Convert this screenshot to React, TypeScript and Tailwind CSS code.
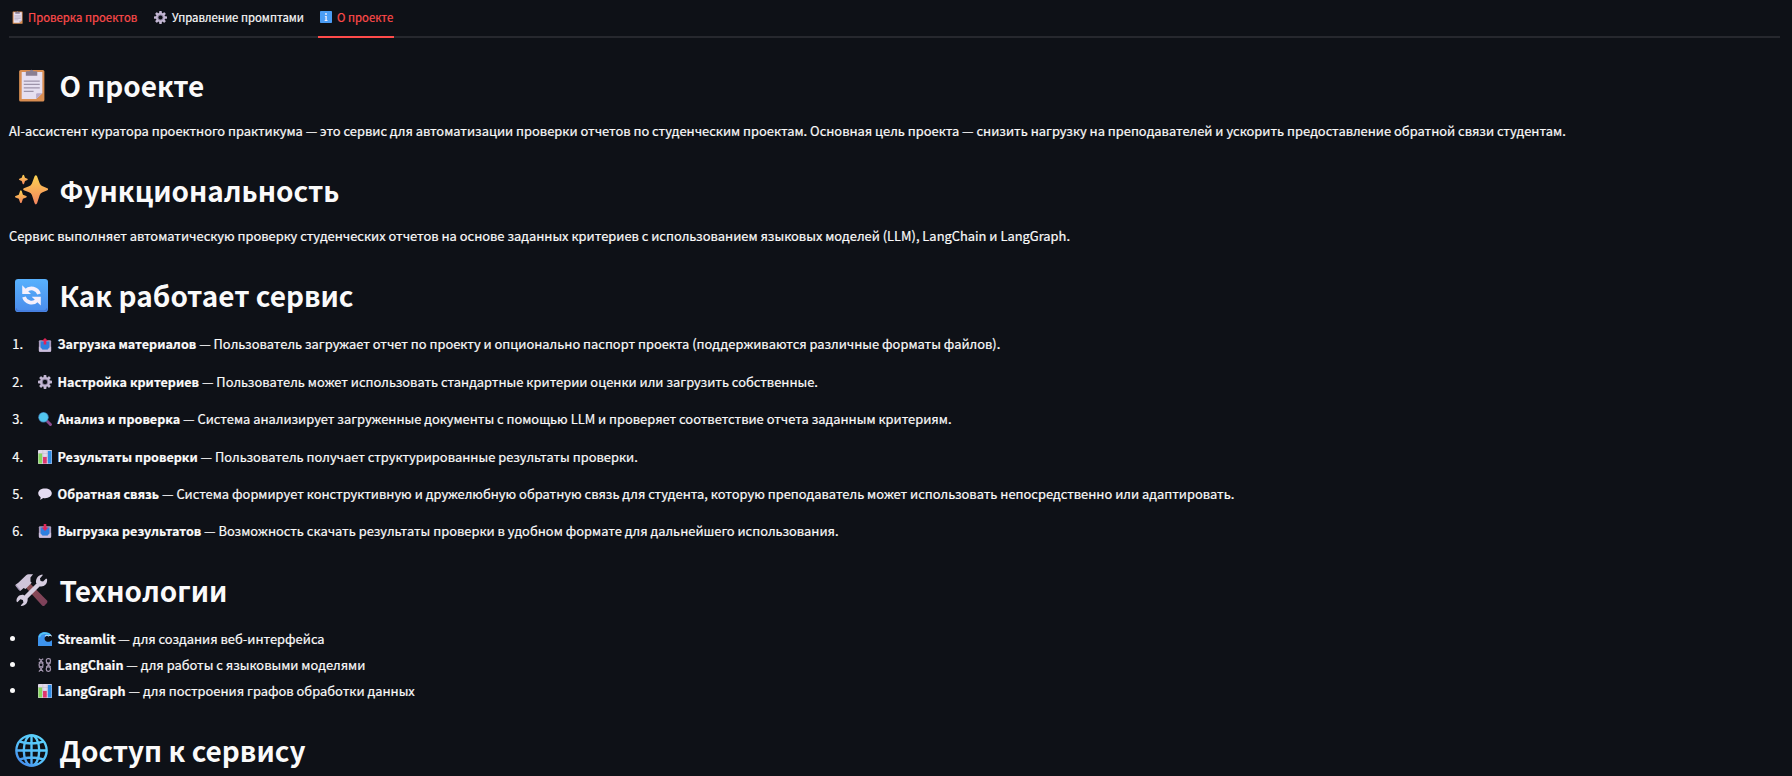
import { type ReactNode } from "react";

type IconProps = { className?: string };

function Clipboard({ className }: IconProps) {
  return (
    <svg className={className} viewBox="0 0 32 32">
      <rect x="4" y="1" width="24.5" height="30.5" rx="1.5" fill="#d98e52" />
      <path d="M6.5 3h20v20.5l-6 5.5h-14z" fill="#e6dff0" />
      <path d="M20.5 29v-4.6q0-.9.9-.9h5.1z" fill="#b9aac9" />
      <path d="M10.5 3.2q0-1 1-1h2.6a2 2 0 0 1 3.9 0h2.6q1 0 1 1v3.4H10.5z" fill="#8a7f93" />
      <path d="M8.5 11.7h15.5M8.5 15h15.5M8.5 18.4h15.5M8.5 21.8h9.5" stroke="#9d93a9" strokeWidth="1.2" />
    </svg>
  );
}

function Gear({ className }: IconProps) {
  return (
    <svg className={className} viewBox="0 0 32 32">
      <g fill="#c3b7d3">
        {[0, 45, 90, 135].map((a) => (
          <rect key={a} x="12.7" y="0" width="6.6" height="32" rx="1.6" transform={`rotate(${a} 16 16)`} />
        ))}
        <circle cx="16" cy="16" r="11.5" />
      </g>
      <circle cx="16" cy="16" r="7.2" fill="#8f83a1" />
      <circle cx="16" cy="16" r="5" fill="#0e1117" />
    </svg>
  );
}

function Info({ className }: IconProps) {
  return (
    <svg className={className} viewBox="0 0 32 32">
      <rect width="32" height="32" rx="2" fill="#4b9df5" />
      <circle cx="16" cy="8" r="2.4" fill="#f3eefb" />
      <path d="M13 13h5v11h2v2.5h-7.500V24h2v-8.500H13z" fill="#f3eefb" />
    </svg>
  );
}

function Sparkles({ className }: IconProps) {
  return (
    <svg className={className} viewBox="0 0 32 32">
      <defs>
        <linearGradient id="spark" x1="0" y1="0" x2="0" y2="1">
          <stop offset="0" stopColor="#fcd351" />
          <stop offset="1" stopColor="#f5855f" />
        </linearGradient>
      </defs>
      <g fill="url(#spark)">
        <path d="M19 2.200q1.200-2.200 2.400 0l2.600 7q.8 2 2.800 2.700l4.600 1.900q1.400 1 0 2l-4.600 1.900q-2 .7-2.800 2.700l-2.600 8q-1.200 2.200-2.400 0l-2.600-8q-.8-2-2.800-2.700l-5-1.900q-1.400-1 0-2l5-1.900q2-.7 2.800-2.700z" />
        <path d="M7.400 1.200q.7-1 1.400 0l.9 2.500 2.300 1q.9 .6 0 1.200l-2.300 1-.9 2.500q-.7 1-1.400 0l-.9-2.500-2.300-1q-.9-.6 0-1.200l2.300-1z" />
        <path d="M4.900 16.400q.8-1.100 1.600 0l1.200 3.600 3.200 1.300q1 .7 0 1.400l-3.200 1.300-1.200 3.600q-.8 1.100-1.600 0L3.700 24 .5 22.700q-1-.7 0-1.400L3.700 20z" />
      </g>
    </svg>
  );
}

function Refresh({ className }: IconProps) {
  return (
    <svg className={className} viewBox="0 0 32 32">
      <defs>
        <linearGradient id="refresh" x1="0" y1="0" x2="0" y2="1">
          <stop offset="0" stopColor="#58b1fd" />
          <stop offset="1" stopColor="#4a8ceb" />
        </linearGradient>
      </defs>
      <rect width="32" height="32" rx="3" fill="url(#refresh)" />
      <path d="M1 28.500q.5 2.500 3 2.500h24q2.500 0 3-2.500" fill="none" stroke="#4373d3" strokeWidth="1" />
      <path d="M10.500 11.500a7.600 7.600 0 0 1 12.800 3M21.500 20.500a7.600 7.600 0 0 1-12.800-3" fill="none" stroke="#f6f0fc" strokeWidth="3.600" />
      <path d="M7 6v8.500h8.500zM25 25.800v-8.600h-8.800z" fill="#f6f0fc" />
    </svg>
  );
}

function Tray({ className, down }: IconProps & { down?: boolean }) {
  return (
    <svg className={className} viewBox="0 0 32 32">
      <rect x="2" y="5" width="28" height="27" rx="2.500" fill="#a99bbd" />
      <path d="M2 20h4l4 6h12l4-6h4v8.500q0 2.500-2.500 2.500h-23Q2 31 2 28.500z" fill="#cbbfdc" />
      <path d="M6 8h20v13l-4 5H10l-4-5z" fill="#2d7fe0" />
      {down ? (
        <path d="M13 0h6v8h4.500L16 16l-7.500-8H13z" fill="#e02558" />
      ) : (
        <path d="M16 0l7 7h-4v8h-6V7H9z" fill="#e02558" />
      )}
    </svg>
  );
}

function Magnifier({ className }: IconProps) {
  return (
    <svg className={className} viewBox="0 0 32 32">
      <path d="M20 20l8.500 8.500" stroke="#8a4c8f" strokeWidth="6.500" strokeLinecap="round" />
      <circle cx="12.500" cy="12" r="12" fill="#3e7cb0" />
      <circle cx="12.500" cy="12" r="10.200" fill="#52c6ee" />
    </svg>
  );
}

function BarChart({ className }: IconProps) {
  return (
    <svg className={className} viewBox="0 0 32 32">
      <rect width="32" height="32" rx="1.500" fill="#e1d9ea" />
      <path d="M0 8h32M0 16h32M0 24h32M11 0v32M21 0v32" stroke="#bfb3cb" strokeWidth="1" />
      <rect x="1" y="8" width="8.500" height="23" fill="#86d65d" />
      <rect x="11.500" y="16" width="8.500" height="15" fill="#e0356e" />
      <rect x="22.500" y="2" width="8.500" height="29" fill="#2f8de6" />
    </svg>
  );
}

function Speech({ className }: IconProps) {
  return (
    <svg className={className} viewBox="0 0 32 32">
      <path d="M16 3.500c9 0 15.500 4.700 15.500 11S25 25.500 16 25.500c-1.500 0-3-.1-4.300-.4C10 27.300 7 28.600 4.500 28.500c1.200-1.500 1.700-3.300 1.400-5.300C2.500 21.200.5 18 .5 14.500c0-6.300 6.500-11 15.500-11z" fill="#e5dcf2" />
    </svg>
  );
}

function Tools({ className }: IconProps) {
  return (
    <svg className={className} viewBox="0 0 32 32">
      <defs>
        <linearGradient id="handle" x1="0" y1="0" x2="1" y2="1">
          <stop offset="0" stopColor="#8d4f50" />
          <stop offset="1" stopColor="#7b3f5c" />
        </linearGradient>
      </defs>
      <path d="M10 12.500l4-4L31 25.800q1 1.200 0 2.400l-2.300 2.300q-1.200 1-2.400 0z" fill="url(#handle)" />
      <path d="M.8 10.200l2.400-1.700L10.800 1.200q1-.9 2.400-.9h4.300L15 3.300v4l1.200 1.200-6 6-1.800-1L5.600 16q-.8.500-1.500-.2L.7 11.700q-.5-.8.100-1.500z" fill="#cfc5da" />
      <path d="M5.600 16l-1.500-.2L.7 11.700l.1-1.500 5 5.800z" fill="#a294b3" />
      <path d="M9 24L25 8" stroke="#d6cde0" strokeWidth="4.400" />
      <path d="M27 1l-2.800 3.300.6 2.400 2.400.6 3-2.900.9.700c.5 4.600-2.700 7.500-6.800 6.900l-3.900-3.500C20 4.500 22.500 1.200 26.300.5z" fill="#d6cde0" />
      <path d="M5.500 30.500l2.700-2.900-.6-2.400-2.400-.6-2.900 2.700-.8-.7c-.4-4 2.800-7 6.900-6.300l3.800 3.500c.6 3.900-2 7-5.900 7.300z" fill="#d6cde0" />
    </svg>
  );
}

function Wave({ className }: IconProps) {
  return (
    <svg className={className} viewBox="0 0 32 32">
      <path d="M0 32V14C0 5 7 0 15 0c8 0 14 3 16.500 9-3-1.500-6-.5-6.500 1.500-3-2-7-2-9 1-2.500 4 0 11 7 11 4 0 7-1.500 9-4v13.500z" fill="#3d93ec" />
      <path d="M3 12C5 5 11 2.500 17 3c6 .5 10 3 11.500 5" fill="none" stroke="#55c9f3" strokeWidth="3.500" />
      <path d="M16 9.500q3-3 6-1.500t4.500 0q3-1 5 1.500" fill="none" stroke="#e4f1fb" strokeWidth="2.200" />
    </svg>
  );
}

function Chains({ className }: IconProps) {
  return (
    <svg className={className} viewBox="0 0 32 32" fill="none" stroke="#a396af" strokeWidth="2.800">
      <path d="M2 1.500l5 3.500 5-3.500M2 12l5-5.500L12 12" />
      <rect x="19" y="1.500" width="9.500" height="10" rx="4" />
      <rect x="2.500" y="11" width="9" height="9" rx="4" />
      <path d="M19 10.500l5 4.500 5-4.500M19 21l5-5 5 5" />
      <path d="M2 19.500l5 5 5-5M2 31l5-5.500 5 5.500" />
      <rect x="19" y="20.500" width="9.500" height="10" rx="4" />
    </svg>
  );
}

function Globe({ className }: IconProps) {
  return (
    <svg className={className} viewBox="0 0 32 32">
      <defs>
        <linearGradient id="globe" gradientUnits="userSpaceOnUse" x1="26" y1="2" x2="4" y2="30">
          <stop offset="0" stopColor="#5bd3fc" />
          <stop offset=".6" stopColor="#55bdf9" />
          <stop offset="1" stopColor="#4183ea" />
        </linearGradient>
      </defs>
      <g fill="none" stroke="url(#globe)" strokeWidth="2.300">
        <circle cx="16" cy="16" r="14.700" />
        <ellipse cx="16" cy="16" rx="7.500" ry="14.700" />
        <path d="M16 1v30M1 16h30M4.500 7.500q11.500 3.500 23 0M4.500 24.500q11.500-3.500 23 0" />
      </g>
    </svg>
  );
}

function Heading({ icon, children }: { icon: ReactNode; children: ReactNode }) {
  return (
    <h2 className="flex h-10 items-center gap-3 pl-[5.500px] text-[27.95px] leading-10 font-bold [-webkit-text-stroke:0]">
      {icon}
      <span>{children}</span>
    </h2>
  );
}

const big = "mt-px size-[33px] shrink-0";
const small = "size-3.5 shrink-0";

const steps = [
  { icon: <Tray className={small} />, title: "Загрузка материалов", text: "Пользователь загружает отчет по проекту и опционально паспорт проекта (поддерживаются различные форматы файлов)." },
  { icon: <Gear className={small} />, title: "Настройка критериев", text: "Пользователь может использовать стандартные критерии оценки или загрузить собственные." },
  { icon: <Magnifier className={small} />, title: "Анализ и проверка", text: "Система анализирует загруженные документы с помощью LLM и проверяет соответствие отчета заданным критериям." },
  { icon: <BarChart className={small} />, title: "Результаты проверки", text: "Пользователь получает структурированные результаты проверки." },
  { icon: <Speech className={small} />, title: "Обратная связь", text: "Система формирует конструктивную и дружелюбную обратную связь для студента, которую преподаватель может использовать непосредственно или адаптировать." },
  { icon: <Tray className={small} down />, title: "Выгрузка результатов", text: "Возможность скачать результаты проверки в удобном формате для дальнейшего использования." },
];

const technologies = [
  { icon: <Wave className={small} />, title: "Streamlit", text: "для создания веб-интерфейса" },
  { icon: <Chains className={small} />, title: "LangChain", text: "для работы с языковыми моделями" },
  { icon: <BarChart className={small} />, title: "LangGraph", text: "для построения графов обработки данных" },
];

export default function App() {
  return (
    <main className="h-[776px] overflow-hidden bg-[#0e1117] pr-3 pl-[9px] font-['Noto_Sans_CJK_SC',sans-serif] text-[12.9px] text-[#fafafa] [-webkit-text-stroke:0.2px]">
      <nav className="flex h-[38px] border-b-2 border-[#26282e] text-[11.35px] leading-[34px]">
        <div className="flex h-[34px] w-[145px] items-center gap-1 pl-0.5 text-[#ff4b4b]">
          <Clipboard className="size-[13px]" />
          <span>Проверка проектов</span>
        </div>
        <div className="flex h-[34px] w-[164px] items-center gap-[5px]">
          <Gear className="size-[13px]" />
          <span>Управление промптами</span>
        </div>
        <div className="flex h-[38px] w-[76px] items-center gap-[5px] border-b-2 border-[#ff4b4b] pb-0.5 pl-0.5 text-[#ff4b4b]">
          <Info className="size-3" />
          <span>О проекте</span>
        </div>
      </nav>

      <section className="pt-[27px]">
        <Heading icon={<Clipboard className={big} />}>О проекте</Heading>
        <p className="mt-3.5 leading-6 whitespace-nowrap">
          AI-ассистент куратора проектного практикума — это сервис для автоматизации проверки отчетов по студенческим проектам. Основная цель проекта — снизить нагрузку на преподавателей и ускорить предоставление обратной связи студентам.
        </p>
      </section>

      <section className="pt-[27px]">
        <Heading icon={<Sparkles className={big} />}>Функциональность</Heading>
        <p className="mt-3.5 leading-6 whitespace-nowrap">
          Сервис выполняет автоматическую проверку студенческих отчетов на основе заданных критериев с использованием языковых моделей (LLM), LangChain и LangGraph.
        </p>
      </section>

      <section className="pt-[27px]">
        <Heading icon={<Refresh className={big} />}>Как работает сервис</Heading>
        <ol className="mt-[18.35px] flex flex-col gap-[15px]">
          {steps.map((step, i) => (
            <li key={step.title} className="flex h-[22.4px] items-center leading-[22.4px] whitespace-nowrap">
              <span className="w-3.5 text-right">{i + 1}.</span>
              <span className="mr-[5.5px] ml-[15px]">{step.icon}</span>
              <span>
                <strong className="text-[12.6px]">{step.title}</strong> — {step.text}
              </span>
            </li>
          ))}
        </ol>
      </section>

      <section className="pt-[27.25px]">
        <Heading icon={<Tools className={big} />}>Технологии</Heading>
        <ul className="mt-4">
          {technologies.map((tech) => (
            <li key={tech.title} className="flex h-[26px] items-center leading-[26px] whitespace-nowrap">
              <span className="ml-[1px] size-[5px] rounded-full bg-[#fafafa]" />
              <span className="mr-[5.5px] ml-[23px]">{tech.icon}</span>
              <span>
                <strong className="text-[12.6px]">{tech.title}</strong> — {tech.text}
              </span>
            </li>
          ))}
        </ul>
      </section>

      <section className="pt-[26px]">
        <Heading icon={<Globe className={big} />}>Доступ к сервису</Heading>
      </section>
    </main>
  );
}
